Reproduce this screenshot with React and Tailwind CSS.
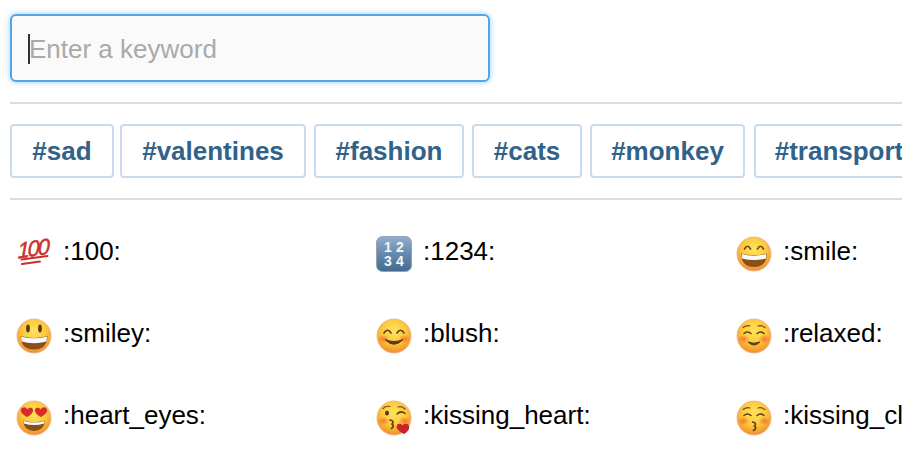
import React from "react";

const FaceDefs = ({ id }) => (
    <defs>
        <radialGradient id={id} cx="50%" cy="36%" r="64%">
            <stop offset="0%" stopColor="#ffe35e" />
            <stop offset="55%" stopColor="#fcc93e" />
            <stop offset="85%" stopColor="#f5a22c" />
            <stop offset="100%" stopColor="#ec8c34" />
        </radialGradient>
        <radialGradient id={`${id}-blush`} cx="50%" cy="50%" r="50%">
            <stop offset="0%" stopColor="#f4622c" stopOpacity="0.75" />
            <stop offset="100%" stopColor="#f4622c" stopOpacity="0" />
        </radialGradient>
    </defs>
);

const Face = ({ id, blush, children }) => (
    <svg width="36" height="36" viewBox="0 0 36 36" className="shrink-0">
        <FaceDefs id={id} />
        <circle cx="18" cy="18" r="17" fill={`url(#${id})`} stroke="#eeb08e" strokeWidth="0.9" />
        {blush && (
            <>
                <ellipse cx="7.5" cy="21" rx="6" ry="4.5" fill={`url(#${id}-blush)`} />
                <ellipse cx="28.5" cy="21" rx="6" ry="4.5" fill={`url(#${id}-blush)`} />
            </>
        )}
        {children}
    </svg>
);

const Hundred = () => (
    <svg width="36" height="36" viewBox="0 0 36 36" className="shrink-0">
        <g transform="rotate(-9 18 18)">
            <text
                x="4"
                y="20"
                fontFamily="Liberation Sans, sans-serif"
                fontSize="22"
                fontStyle="italic"
                fontWeight="400"
                fill="#c9302c"
                stroke="#c9302c"
                strokeWidth="0.5"
                letterSpacing="-2"
                transform="skewX(-8)"
            >
                100
            </text>
        </g>
        <path d="M5.5 23.5 L31.5 20" stroke="#c9302c" strokeWidth="2" strokeLinecap="round" />
        <path d="M6 28 L24 25.5" stroke="#c9302c" strokeWidth="2" strokeLinecap="round" />
    </svg>
);

const Numbers = () => (
    <svg width="36" height="36" viewBox="0 0 36 36" className="shrink-0">
        <defs>
            <linearGradient id="keycap" x1="0" y1="0" x2="0" y2="1">
                <stop offset="0%" stopColor="#93aecb" />
                <stop offset="50%" stopColor="#668aaf" />
                <stop offset="100%" stopColor="#446a90" />
            </linearGradient>
        </defs>
        <rect x="0.5" y="0.5" width="35" height="35" rx="6" fill="url(#keycap)" stroke="#93a3b5" />
        <g fontFamily="Liberation Sans, sans-serif" fontSize="14" fontWeight="700" fill="#f4f7fa" textAnchor="middle">
            <text x="12" y="15.5">1</text>
            <text x="24" y="15.5">2</text>
            <text x="12" y="30">3</text>
            <text x="24" y="30">4</text>
        </g>
    </svg>
);

const Smile = () => (
    <Face id="smile">
        <path d="M8.5 13 Q11.5 7.5 14.5 13 M21.5 13 Q24.5 7.5 27.5 13" fill="none" stroke="#6b4216" strokeWidth="1.6" strokeLinecap="round" />
        <path d="M5 17.5 Q18 21 31 17.5 Q30.5 31 18 31 Q5.5 31 5 17.5 Z" fill="#8a4d1c" />
        <path d="M5.6 18 Q18 21.3 30.4 18 L30 22.5 Q18 25.5 6 22.5 Z" fill="#fbfbfb" />
    </Face>
);

const Smiley = () => (
    <Face id="smiley">
        <ellipse cx="12" cy="10.5" rx="1.9" ry="4" fill="#5b3a14" />
        <ellipse cx="24" cy="10.5" rx="1.9" ry="4" fill="#5b3a14" />
        <path d="M4.5 18 Q18 22 31.5 18 Q31 31.5 18 31.5 Q5 31.5 4.5 18 Z" fill="#8a4d1c" />
        <path d="M5 18.5 Q18 22.2 31 18.5 L30.5 23.5 Q18 27 5.5 23.5 Z" fill="#fbfbfb" />
    </Face>
);

const HeartEyes = () => (
    <Face id="heart">
        <path d="M11 17 C5 14 3.5 10 6 8 C8 6.5 10.5 7.5 11.2 9.5 C12.5 7.5 15.5 7 16.8 9 C18 11.5 15.5 15 11 17 Z" fill="#d92b2b" />
        <path d="M25 17 C20.5 15 18 11.5 19.2 9 C20.5 7 23.5 7.5 24.8 9.5 C25.5 7.5 28 6.5 30 8 C32.5 10 31 14 25 17 Z" fill="#d92b2b" />
        <path d="M7 20.5 Q18 24 29 20.5 Q28 31 18 31 Q8 31 7 20.5 Z" fill="#8a4d1c" />
        <path d="M7.5 21 Q18 24.2 28.5 21 L28 23.5 Q18 26.5 8 23.5 Z" fill="#fbfbfb" />
    </Face>
);

const Blush = () => (
    <Face id="blush" blush>
        <path d="M8 15 Q11.5 9.5 15 15 M21 15 Q24.5 9.5 28 15" fill="none" stroke="#5b3a14" strokeWidth="1.6" strokeLinecap="round" />
        <path d="M9 21.5 Q18 31 27 21.5 Q18 25.5 9 21.5 Z" fill="#5b3a14" stroke="#5b3a14" strokeWidth="1" strokeLinejoin="round" />
    </Face>
);

const Relaxed = () => (
    <Face id="relaxed" blush>
        <path d="M7 9.5 Q10.5 7 14 8 M22 8 Q25.5 7 29 9.5" fill="none" stroke="#7a4b1a" strokeWidth="1.2" strokeLinecap="round" />
        <path d="M8 15.5 Q11.5 12.5 15 15.5 M21 15.5 Q24.5 12.5 28 15.5" fill="none" stroke="#5b3a14" strokeWidth="1.5" strokeLinecap="round" />
        <path d="M12 24 Q18 30 24 24 Q18 26.5 12 24 Z" fill="#5b3a14" stroke="#5b3a14" strokeWidth="1" strokeLinejoin="round" />
    </Face>
);

const KissingHeart = () => (
    <Face id="kissheart" blush>
        <path d="M7 8.5 Q10 5.5 14 6.5 M22 7 Q26 5.5 29 9" fill="none" stroke="#7a4b1a" strokeWidth="1.2" strokeLinecap="round" />
        <ellipse cx="11" cy="13" rx="2" ry="2.6" fill="#5b3a14" />
        <path d="M21 14 Q25 10 29 13.5" fill="none" stroke="#5b3a14" strokeWidth="1.5" strokeLinecap="round" />
        <path d="M14 20 Q19 21 16 24 Q19 26 15.5 28.5" fill="none" stroke="#5b3a14" strokeWidth="1.6" strokeLinecap="round" />
        <path d="M28 34 C22 31 19.5 27.5 21 25 C22.5 23 25.5 23.5 26.5 25.5 C27.5 23.5 31 23 32.5 25 C34.5 28 32 32 28 34 Z" fill="#c9242a" />
    </Face>
);

const KissingClosed = () => (
    <Face id="kissclosed" blush>
        <path d="M7 9.5 Q10.5 7 14 8 M22 8 Q25.5 7 29 9.5" fill="none" stroke="#7a4b1a" strokeWidth="1.2" strokeLinecap="round" />
        <path d="M8 15.5 Q11.5 12.5 15 15.5 M21 15.5 Q24.5 12.5 28 15.5" fill="none" stroke="#5b3a14" strokeWidth="1.5" strokeLinecap="round" />
        <path d="M16.5 22 Q21.5 23 18.5 26 Q21.5 28 17.5 30.5" fill="none" stroke="#5b3a14" strokeWidth="1.6" strokeLinecap="round" />
    </Face>
);

const tags = [
    { label: "#sad", size: "w-[104px] -mr-[2px]" },
    { label: "#valentines", size: "w-[186px]" },
    { label: "#fashion", size: "w-[150px]" },
    { label: "#cats", size: "w-[110px]" },
    { label: "#monkey", size: "w-[155px] mr-[1px]" },
    { label: "#transport", size: "w-[170px]" },
];

const emojis = [
    { name: ":100:", Icon: Hundred },
    { name: ":1234:", Icon: Numbers },
    { name: ":smile:", Icon: Smile },
    { name: ":smiley:", Icon: Smiley },
    { name: ":blush:", Icon: Blush },
    { name: ":relaxed:", Icon: Relaxed },
    { name: ":heart_eyes:", Icon: HeartEyes },
    { name: ":kissing_heart:", Icon: KissingHeart },
    { name: ":kissing_closed_eyes:", Icon: KissingClosed },
];

const App = () => {
    return (
        <div className="w-[902px] h-[449px] overflow-hidden bg-white pl-[10px] pt-[14px] font-['Liberation_Sans',Arial,sans-serif] text-[26px]">
            {/* Search */}
            <div className="relative w-[480px]">
                <input
                    type="text"
                    placeholder="Enter a keyword"
                    className="w-full h-[68px] pl-[17px] pr-[17px] pt-[2px] bg-[#fafafa] border-2 border-[#4fa6ea] rounded-md shadow-[0_0_6px_rgba(79,166,234,0.55)] outline-none placeholder:text-[#a9a9a9]"
                />
                <span className="absolute left-[18px] top-[20px] w-[2px] h-[30px] bg-[#333333]"></span>
            </div>

            {/* Tags */}
            <div className="mt-[20px] border-y-2 border-[#dddddd] py-[20px] flex gap-2 overflow-hidden">
                {tags.map((tag) => (
                    <button
                        key={tag.label}
                        type="button"
                        className={`${tag.size} shrink-0 h-[54px] bg-white border-2 border-[#c9dbed] rounded font-bold text-[#30628a] leading-none text-center whitespace-nowrap`}
                    >
                        {tag.label}
                    </button>
                ))}
            </div>

            {/* Emoji list */}
            <div className="pt-[13px] grid grid-cols-[360px_360px_360px] auto-rows-[82px] ml-[6px] w-[1080px]">
                {emojis.map(({ name, Icon }) => (
                    <div key={name} className="flex items-center gap-[11px] text-black">
                        <Icon />
                        <span className="-mt-[5px] whitespace-nowrap">{name}</span>
                    </div>
                ))}
            </div>
        </div>
    );
};

export default App;
